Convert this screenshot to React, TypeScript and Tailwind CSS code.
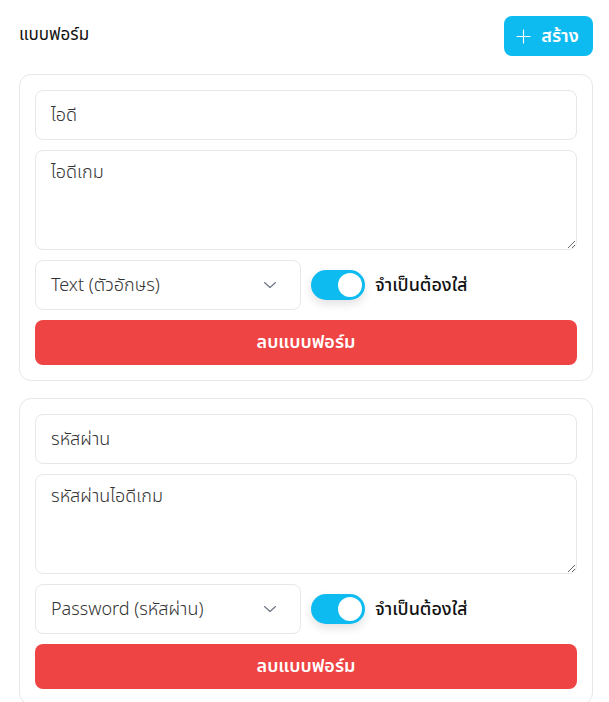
import React from "react";

function Toggle() {
  return (
    <div className="relative w-[54px] h-[30px] rounded-full bg-[#0ebbf1] shadow-[0_4px_10px_rgba(0,0,0,0.12)] shrink-0">
      <div className="absolute right-[3px] top-[3px] w-[24px] h-[24px] rounded-full bg-white" />
    </div>
  );
}

function Chevron() {
  return (
    <svg width="16" height="16" viewBox="0 0 16 16" fill="none" className="shrink-0">
      <path d="M2.5 5.5 L8 10.5 L13.5 5.5" stroke="#6b7280" strokeWidth="1.1" strokeLinecap="round" strokeLinejoin="round" />
    </svg>
  );
}

function FormCard({ name, desc, type }: { name: string; desc: string; type: string }) {
  return (
    <div className="border border-[#e5e7eb] rounded-xl p-[15px] flex flex-col gap-[10px] bg-white">
      <div className="h-[50px] border border-[#e5e7eb] rounded-lg px-[15px] flex items-center text-[18px] font-light text-[#333]">
        {name}
      </div>
      <textarea
        readOnly
        value={desc}
        className="h-[100px] border border-[#e5e7eb] rounded-lg px-[15px] py-[8px] text-[18px] font-light text-[#333] outline-none resize-y"
      />
      <div className="flex items-center gap-[10px]">
        <div className="w-[266px] h-[50px] border border-[#e5e7eb] rounded-lg pl-[15px] pr-[22px] flex items-center justify-between text-[18px] font-light text-[#333]">
          <span>{type}</span>
          <Chevron />
        </div>
        <Toggle />
        <span className="text-[18px] font-medium text-[#111]">จำเป็นต้องใส่</span>
      </div>
      <button className="h-[45px] rounded-lg bg-[#ef4444] text-white text-[18px] font-semibold flex items-center justify-center">
        ลบแบบฟอร์ม
      </button>
    </div>
  );
}

export default function App() {
  return (
    <div className="w-[609px] h-[702px] overflow-hidden bg-white px-[16px] font-['Noto_Sans_Thai','Noto_Sans',sans-serif]">
      <div className="flex items-center justify-between pl-[3px] pt-[16px] pb-[18px]">
        <span className="text-[17px] font-normal text-[#111]">แบบฟอร์ม</span>
        <button className="h-[40px] w-[89px] rounded-lg bg-[#0ebbf1] text-white flex items-center justify-center gap-[10px] pr-[2px]">
          <svg width="15" height="15" viewBox="0 0 16 16" fill="none">
            <path d="M8 1 V15 M1 8 H15" stroke="white" strokeWidth="1.2" strokeLinecap="round" />
          </svg>
          <span className="text-[18px] font-semibold">สร้าง</span>
        </button>
      </div>
      <div className="pl-[3px] flex flex-col gap-[17px]">
        <FormCard name="ไอดี" desc="ไอดีเกม" type="Text (ตัวอักษร)" />
        <FormCard name="รหัสผ่าน" desc="รหัสผ่านไอดีเกม" type="Password (รหัสผ่าน)" />
      </div>
    </div>
  );
}
